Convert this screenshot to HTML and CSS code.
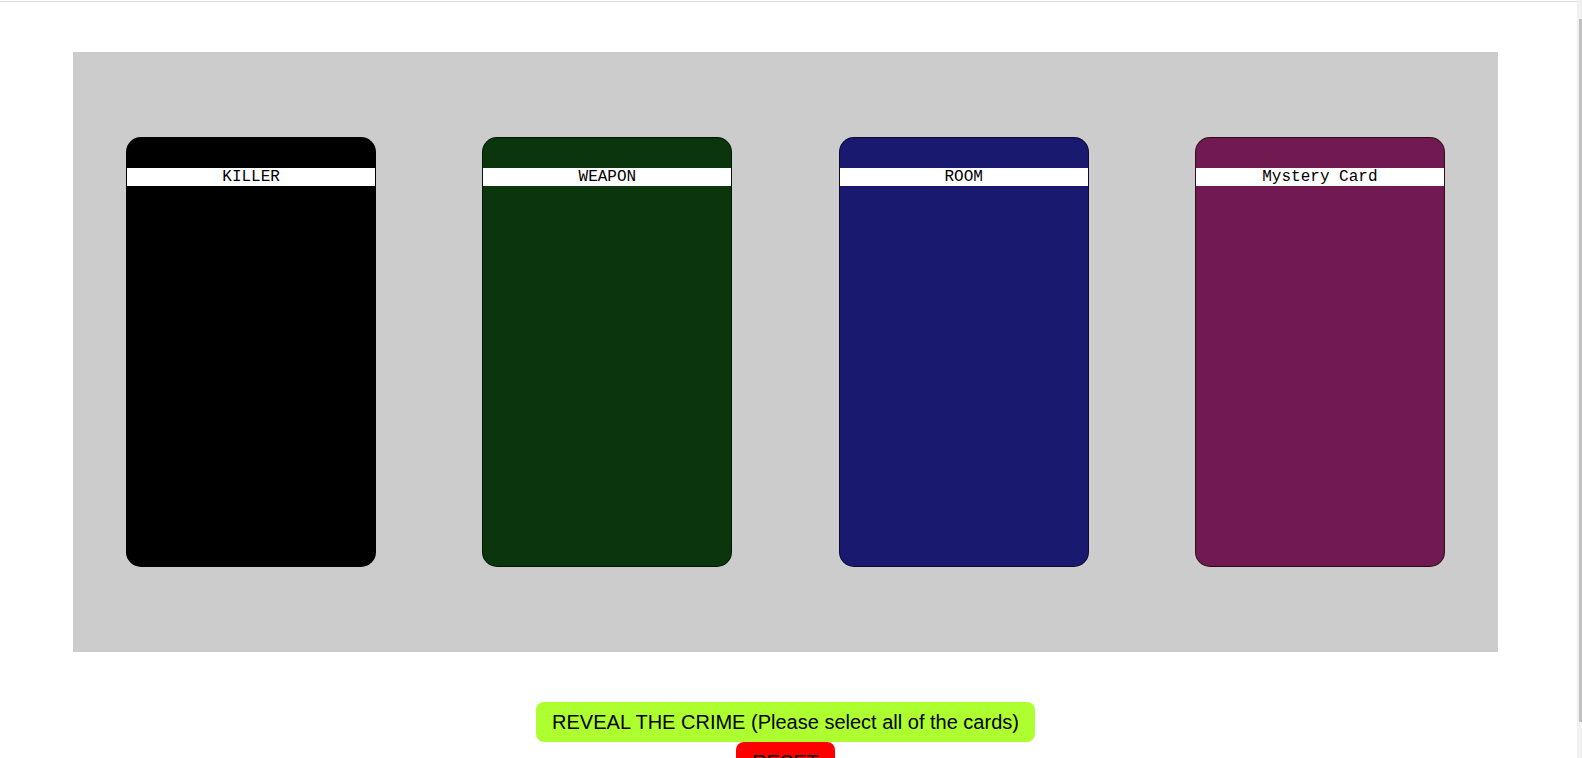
FILE: index.html
```html
<!DOCTYPE html>
<html lang="en">
<head>
<meta charset="utf-8">
<title>Clue</title>
<link rel="stylesheet" href="styles.css">
</head>
<body>
<div class="topline"></div>
<div class="page">
  <div class="board">
    <div class="card card-killer"><div class="label">KILLER</div></div>
    <div class="card card-weapon"><div class="label">WEAPON</div></div>
    <div class="card card-room"><div class="label">ROOM</div></div>
    <div class="card card-mystery"><div class="label">Mystery Card</div></div>
  </div>
  <div class="controls">
    <button class="btn btn-reveal">REVEAL THE CRIME (Please select all of the cards)</button>
    <button class="btn btn-reset">RESET</button>
  </div>
</div>
<div class="scrollbar"><div class="thumb"></div></div>
</body>
</html>
```
FILE: styles.css
```css
html, body {
  margin: 0;
  padding: 0;
  background: #ffffff;
}
body {
  padding-top: 1px;
  font-family: "Liberation Sans", Arial, sans-serif;
}
.topline {
  width: 1577px;
  height: 1px;
  background: #dedede;
}
.page {
  width: 1571px;
}
.board {
  margin: 50px auto 0;
  width: 1425px;
  height: 600px;
  background: #cccccc;
  display: flex;
  justify-content: space-around;
  align-items: center;
}
.card {
  width: 250px;
  height: 430px;
  box-sizing: border-box;
  border: 1px solid rgba(0, 0, 0, 0.6);
  border-radius: 15px;
  padding-top: 30px;
}
.card-killer { background: #000000; }
.card-weapon { background: #0b350d; }
.card-room { background: #191970; }
.card-mystery { background: #701a51; }
.label {
  background: #ffffff;
  color: #000000;
  font-family: "Liberation Mono", "Courier New", monospace;
  font-size: 16px;
  text-align: center;
}
.controls {
  margin-top: 50px;
  display: flex;
  flex-direction: column;
  align-items: center;
  padding-bottom: 40px;
}
.btn {
  border: none;
  border-radius: 8px;
  font-family: "Liberation Sans", Arial, sans-serif;
  font-size: 20px;
  padding: 8.5px 16px;
  color: #000000;
  margin: 0;
}
.btn-reveal { background: #adff2f; }
.btn-reset { background: #ff0000; }
.scrollbar {
  position: fixed;
  top: 0;
  right: 0;
  width: 5px;
  height: 100%;
  background: #f1f1f1;
}
.thumb {
  position: absolute;
  top: 19px;
  left: 2px;
  right: 0;
  height: 703px;
  background: #c1c1c1;
}
```
